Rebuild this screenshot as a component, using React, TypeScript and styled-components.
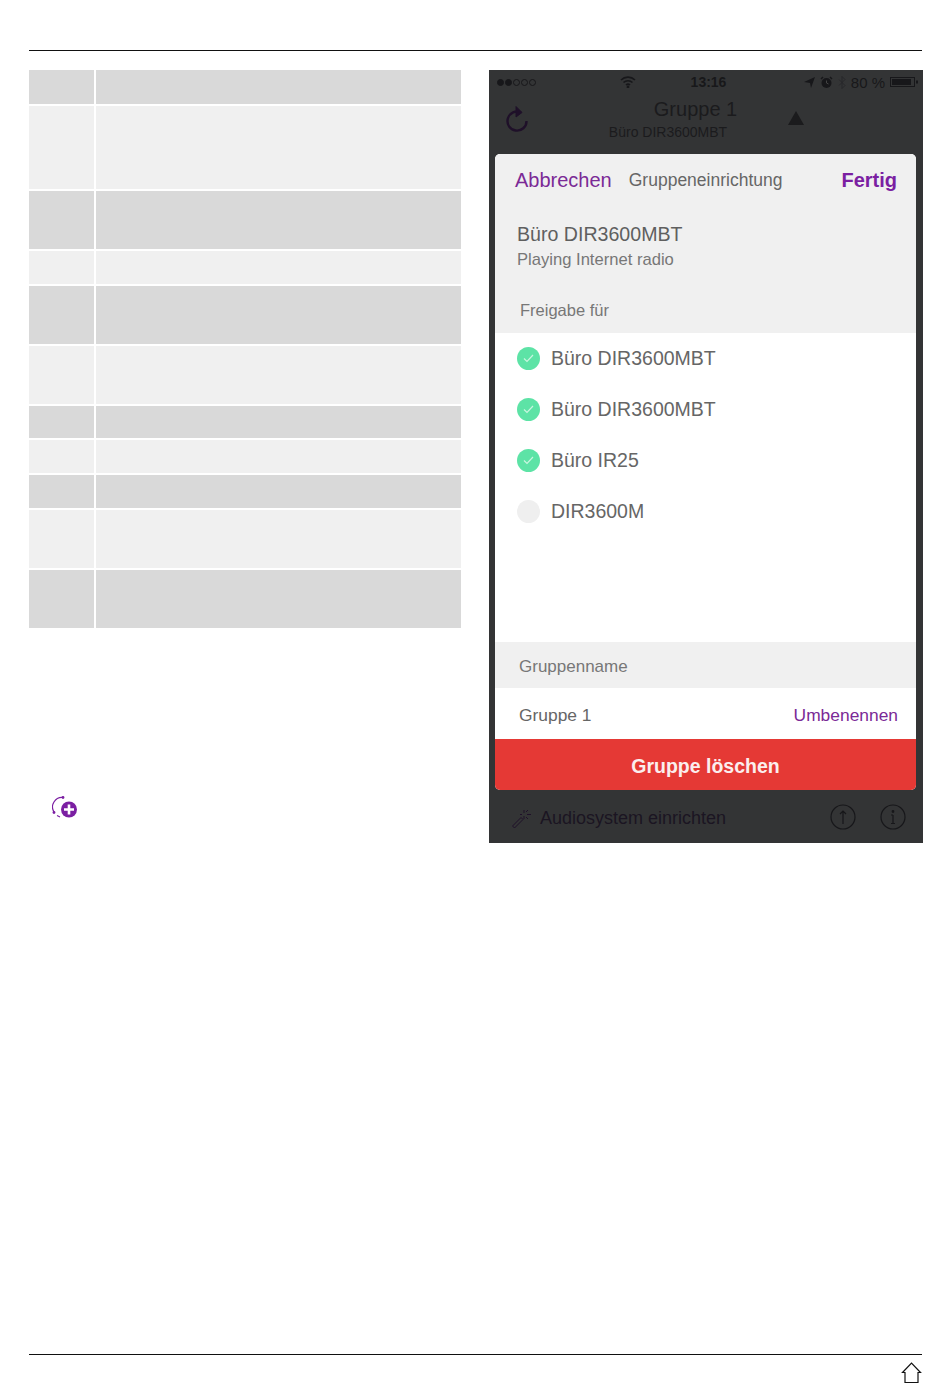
import React from "react";
import styled, { createGlobalStyle } from "styled-components";

const Global = createGlobalStyle`
  html, body { margin: 0; padding: 0; background: #fff; }
  body { font-family: "Liberation Sans", Arial, sans-serif; }
`;

const Page = styled.div`
  width: 950px;
  height: 1383px;
  overflow: hidden;
  padding: 50px 28px 0 29px;
  box-sizing: border-box;
  display: flex;
  flex-direction: column;
`;
const TopRule = styled.div`
  height: 1px;
  background: #111;
  flex: none;
`;
const Content = styled.div`
  flex: 1;
  display: flex;
  gap: 28px;
  padding-top: 19px;
  align-items: flex-start;
`;
const LeftColumn = styled.div`
  width: 432px;
  display: flex;
  flex-direction: column;
`;
const Table = styled.div`
  display: flex;
  flex-direction: column;
  gap: 2px;
`;
const Row = styled.div<{ $h: number; $dark: boolean }>`
  height: ${(p) => p.$h}px;
  display: grid;
  grid-template-columns: 65px 365px;
  column-gap: 2px;
  & > div { background: ${(p) => (p.$dark ? "#d9d9d9" : "#f0f0f0")}; }
`;
const Cell = styled.div``;
const AddIcon = styled.svg`
  display: block;
  margin: 168px 0 0 23px;
`;

const Phone = styled.div`
  position: relative;
  width: 434px;
  height: 773px;
  background: #333435;
  flex: none;
`;
const StatusBar = styled.div`
  height: 24px;
  padding: 0 4px 0 8px;
  display: grid;
  grid-template-columns: 123px 16px 54px 37px 1fr;
  align-items: center;
  color: #18181a;
  font-size: 14px;
`;
const Dots = styled.div`
  display: flex;
  gap: 1px;
`;
const Dot = styled.span<{ $on: boolean }>`
  width: 7px;
  height: 7px;
  border-radius: 50%;
  box-sizing: border-box;
  border: 1px solid #17171a;
  background: ${(p) => (p.$on ? "#17171a" : "transparent")};
`;
const WifiBox = styled.div`
  display: flex;
  justify-content: center;
`;
const Spacer = styled.div``;
const Clock = styled.div`
  font-size: 14px;
  font-weight: 700;
  text-align: center;
  white-space: nowrap;
`;
const StatusRight = styled.div`
  display: flex;
  align-items: center;
  justify-content: flex-end;
  gap: 5px;
`;
const BatteryText = styled.span`
  font-size: 15px;
`;
const PhoneHeader = styled.div`
  height: 60px;
  display: flex;
  align-items: flex-start;
  padding: 4px 0 0 17px;
`;
const RefreshIcon = styled.svg`
  margin-top: 6px;
  flex: none;
`;
const Titles = styled.div`
  width: 257px;
  margin-left: 28px;
  text-align: center;
  padding-left: 14px;
  box-sizing: border-box;
`;
const TitleMain = styled.div`
  font-size: 20px;
  line-height: 23px;
  color: #1b1b1d;
`;
const TitleSub = styled.div`
  font-size: 14px;
  line-height: 16px;
  margin-top: 3px;
  margin-left: -55px;
  color: #1b1b1d;
`;
const Triangle = styled.svg`
  margin: 13px 0 0 -29px;
  flex: none;
`;

const Sheet = styled.div`
  position: absolute;
  left: 6px;
  top: 84px;
  width: 421px;
  height: 636px;
  border-radius: 5px;
  overflow: hidden;
  background: #fff;
  display: flex;
  flex-direction: column;
`;
const SheetTop = styled.div`
  height: 179px;
  background: #f0f0f0;
  flex: none;
`;
const SheetNav = styled.div`
  display: flex;
  align-items: center;
  height: 52px;
  padding: 0 19px 0 20px;
`;
const Cancel = styled.span`
  font-size: 20px;
  color: #7b2a96;
`;
const NavTitle = styled.span`
  font-size: 17.5px;
  color: #666;
  margin-left: 17px;
  flex: 1;
`;
const Done = styled.span`
  font-size: 20px;
  font-weight: 700;
  color: #7b1fa2;
`;
const DeviceName = styled.div`
  font-size: 19.6px;
  color: #5f5f5f;
  line-height: 24px;
  margin: 16px 0 0 22px;
`;
const DeviceState = styled.div`
  font-size: 16.6px;
  color: #777;
  line-height: 20px;
  margin: 4px 0 0 22px;
`;
const SectionLabel = styled.div`
  font-size: 16.5px;
  color: #777;
  line-height: 20px;
  margin: 30px 0 0 25px;
`;
const List = styled.div`
  height: 309px;
  flex: none;
  display: flex;
  flex-direction: column;
  padding: 0 0 0 22px;
`;
const ListRow = styled.div`
  height: 51px;
  display: flex;
  align-items: center;
  gap: 11px;
`;
const Check = styled.span<{ $on: boolean }>`
  width: 23px;
  height: 23px;
  border-radius: 50%;
  background: ${(p) => (p.$on ? "#5de3a6" : "#efefef")};
  display: flex;
  align-items: center;
  justify-content: center;
  flex: none;
`;
const ListLabel = styled.span`
  font-size: 19.5px;
  color: #666;
`;
const GrayBand = styled.div`
  height: 46px;
  box-sizing: border-box;
  background: #f0f0f0;
  display: flex;
  align-items: center;
  padding: 4px 0 0 24px;
  font-size: 17px;
  color: #777;
  flex: none;
`;
const NameRow = styled.div`
  height: 51px;
  display: flex;
  align-items: center;
  justify-content: space-between;
  padding: 4px 18px 0 24px;
  box-sizing: border-box;
  font-size: 17.4px;
  color: #666;
  flex: none;
`;
const Rename = styled.span`
  color: #7b2a96;
`;
const DeleteButton = styled.div`
  height: 51px;
  box-sizing: border-box;
  padding-top: 3px;
  background: #e53935;
  color: #fbeeee;
  font-size: 19.5px;
  font-weight: 700;
  display: flex;
  align-items: center;
  justify-content: center;
  flex: none;
`;
const PhoneFooter = styled.div`
  position: absolute;
  left: 0;
  right: 0;
  bottom: 0;
  height: 53px;
  box-sizing: border-box;
  display: flex;
  align-items: center;
  padding: 3px 17px 0 22px;
  gap: 9px;
  font-size: 18px;
  color: #1b1522;
`;
const FooterText = styled.span`
  flex: 1;
`;
const RoundIcons = styled.div`
  display: flex;
  gap: 24px;
  margin-top: -2px;
`;

const BottomRule = styled.div`
  height: 1px;
  background: #111;
  flex: none;
`;
const Footer = styled.div`
  height: 28px;
  box-sizing: border-box;
  display: flex;
  justify-content: flex-end;
  padding: 7px 0 0;
  flex: none;
`;

const rows = [34, 83, 58, 33, 58, 58, 32, 33, 33, 58, 58];

export default function App() {
  return (
    <Page>
      <Global />
      <TopRule />
      <Content>
        <LeftColumn>
          <Table>
            {rows.map((h, i) => (
              <Row key={i} $h={h} $dark={[0, 2, 4, 6, 8, 10].includes(i)}>
                <Cell />
                <Cell />
              </Row>
            ))}
          </Table>
          <AddIcon width="27" height="24" viewBox="0 0 27 24" fill="none">
            <path d="M11 1.500A9.500 9.500 0 0 0 2 16" stroke="#7b1fa2" strokeWidth="1.2" />
            <path d="M5 19.500l3 1.500" stroke="#7b1fa2" strokeWidth="1.2" />
            <circle cx="11" cy="1.500" r="1.400" fill="#7b1fa2" />
            <circle cx="2" cy="16.500" r="1.400" fill="#7b1fa2" />
            <circle cx="17" cy="13.500" r="8" fill="#7b1fa2" />
            <path d="M17 8.500v10M12 13.500h10" stroke="#fff" strokeWidth="2.600" />
          </AddIcon>
        </LeftColumn>
        <Phone>
          <StatusBar>
            <Dots>
              {[1, 1, 0, 0, 0].map((v, i) => (
                <Dot key={i} $on={!!v} />
              ))}
            </Dots>
            <WifiBox>
              <svg width="16" height="12" viewBox="0 0 16 12" fill="none" stroke="#17171a" strokeWidth="1.600">
                <path d="M1 4a10 10 0 0 1 14 0M3.500 6.500a6.500 6.500 0 0 1 9 0M6 9a3 3 0 0 1 4 0" />
                <circle cx="8" cy="11" r="0.600" />
              </svg>
            </WifiBox>
            <Spacer />
            <Clock>13:16</Clock>
            <StatusRight>
              <svg width="11" height="11" viewBox="0 0 11 11"><path d="M0 5 11 0 7 11 6 6z" fill="#17171a" /></svg>
              <svg width="13" height="13" viewBox="0 0 13 13"><circle cx="6.500" cy="7" r="5" fill="#17171a" /><path d="M1 3l2-2M12 3l-2-2" stroke="#17171a" strokeWidth="1.500" /><path d="M6.500 4.500V7l2 1" stroke="#444" fill="none" /></svg>
              <svg width="8" height="13" viewBox="0 0 8 13" fill="none" stroke="#27272a" strokeWidth="1"><path d="M1 3.500l6 6-3 3V.5l3 3-6 6" /></svg>
              <BatteryText>80 %</BatteryText>
              <svg width="29" height="12" viewBox="0 0 29 12">
                <rect x="0.500" y="1.500" width="24" height="9" fill="none" stroke="#17171a" />
                <rect x="2" y="3" width="19" height="6" fill="#17171a" />
                <rect x="26" y="4.500" width="2" height="3" fill="#17171a" />
              </svg>
            </StatusRight>
          </StatusBar>
          <PhoneHeader>
            <RefreshIcon width="26" height="30" viewBox="0 0 26 30" fill="none" stroke="#1f1029" strokeWidth="2.400">
              <path d="M15 8.500A9.500 9.500 0 1 0 20.500 17" />
              <path d="M10 2.500l6 6-6 4.500z" fill="#1f1029" strokeWidth="1" />
            </RefreshIcon>
            <Titles>
              <TitleMain>Gruppe 1</TitleMain>
              <TitleSub>Büro DIR3600MBT</TitleSub>
            </Titles>
            <Triangle width="16" height="14" viewBox="0 0 16 14"><path d="M8 0 16 14H0z" fill="#1b1b1d" /></Triangle>
          </PhoneHeader>
          <Sheet>
            <SheetTop>
              <SheetNav>
                <Cancel>Abbrechen</Cancel>
                <NavTitle>Gruppeneinrichtung</NavTitle>
                <Done>Fertig</Done>
              </SheetNav>
              <DeviceName>Büro DIR3600MBT</DeviceName>
              <DeviceState>Playing Internet radio</DeviceState>
              <SectionLabel>Freigabe für</SectionLabel>
            </SheetTop>
            <List>
              {[
                ["Büro DIR3600MBT", true],
                ["Büro DIR3600MBT", true],
                ["Büro IR25", true],
                ["DIR3600M", false],
              ].map(([name, on], i) => (
                <ListRow key={i}>
                  <Check $on={on as boolean}>
                    {on && (
                      <svg width="11" height="9" viewBox="0 0 11 9" fill="none" stroke="#c9f5e0" strokeWidth="1.200">
                        <path d="M1 4.500l3 3 6-6.500" />
                      </svg>
                    )}
                  </Check>
                  <ListLabel>{name as string}</ListLabel>
                </ListRow>
              ))}
            </List>
            <GrayBand>Gruppenname</GrayBand>
            <NameRow>
              <span>Gruppe 1</span>
              <Rename>Umbenennen</Rename>
            </NameRow>
            <DeleteButton>Gruppe löschen</DeleteButton>
          </Sheet>
          <PhoneFooter>
            <svg width="20" height="20" viewBox="0 0 20 20" fill="none" stroke="#1f1029" strokeWidth="1">
              <path d="M1.500 18 10 9.500l2 2L3.500 20z" />
              <path d="M13 2v3M13 8v3M16 6.500h4M9 6.500h2M15 4l2-2M15 9l2 2" />
            </svg>
            <FooterText>Audiosystem einrichten</FooterText>
            <RoundIcons>
              <svg width="26" height="26" viewBox="0 0 26 26" fill="none" stroke="#17171a" strokeWidth="1.200">
                <circle cx="13" cy="13" r="12" />
                <path d="M13 20V7M10 10l3-3 3 3" />
              </svg>
              <svg width="26" height="26" viewBox="0 0 26 26" fill="none" stroke="#17171a" strokeWidth="1.200">
                <circle cx="13" cy="13" r="12" />
                <path d="M13 11v8M11 11h2M11 19.500h4" />
                <circle cx="13" cy="7.500" r="0.800" fill="#17171a" />
              </svg>
            </RoundIcons>
          </PhoneFooter>
        </Phone>
      </Content>
      <BottomRule />
      <Footer>
        <svg width="21" height="21" viewBox="0 0 21 21" fill="none" stroke="#111" strokeWidth="1.200">
          <path d="M4 20.500V10.500H1.500L10.500 1 19.500 10.500H17V20.500z" />
        </svg>
      </Footer>
    </Page>
  );
}
